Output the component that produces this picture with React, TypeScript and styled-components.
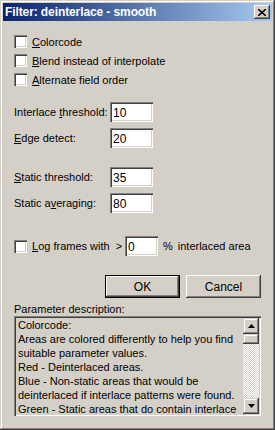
import React, { useState } from "react";
import styled, { createGlobalStyle } from "styled-components";

const GlobalStyle = createGlobalStyle`
  html, body {
    margin: 0;
    padding: 0;
    background: #d4d0c8;
  }
  body {
    font-family: "Liberation Sans", Arial, sans-serif;
    font-size: 11px;
    color: #000;
  }
`;

const Window = styled.div`
  width: 275px;
  height: 430px;
  box-sizing: border-box;
  background: #d4d0c8;
  padding: 3px;
  box-shadow: inset -1px -1px #404040, inset 1px 1px #d4d0c8,
    inset -2px -2px #808080, inset 2px 2px #ffffff;
  display: flex;
  flex-direction: column;
`;

const TitleBar = styled.div`
  height: 18px;
  display: flex;
  align-items: center;
  justify-content: space-between;
  padding: 0 2px 0 2px;
  background: linear-gradient(to right, #0a246a, #a6caf0);
`;

const Title = styled.span`
  color: #fff;
  font-weight: bold;
  font-size: 12px;
  letter-spacing: -0.1px;
`;

const CloseButton = styled.div`
  width: 16px;
  height: 14px;
  box-sizing: border-box;
  background: #d4d0c8;
  display: flex;
  align-items: center;
  justify-content: center;
  box-shadow: inset -1px -1px #404040, inset 1px 1px #ffffff,
    inset -2px -2px #808080;
`;

const Body = styled.div`
  flex: 1;
  display: flex;
  flex-direction: column;
  padding: 11px 11px 0 11px;
`;

const CheckRow = styled.label`
  height: 19px;
  display: flex;
  align-items: center;
  white-space: nowrap;
`;

const Box = styled.span`
  width: 13px;
  height: 13px;
  box-sizing: border-box;
  background: #fff;
  margin-right: 5px;
  flex-shrink: 0;
  box-shadow: inset 1px 1px #808080, inset 2px 2px #404040,
    inset -1px -1px #ffffff, inset -2px -2px #d4d0c8;
`;

const FieldRow = styled.div<{ $top: number }>`
  display: flex;
  align-items: center;
  margin-top: ${(p) => p.$top}px;
  white-space: nowrap;
`;

const Label = styled.span<{ $w?: number }>`
  width: ${(p) => p.$w ?? 96}px;
`;

const TextBox = styled.input<{ $w: number }>`
  width: ${(p) => p.$w}px;
  height: 20px;
  box-sizing: border-box;
  border: none;
  outline: none;
  margin: 0;
  padding: 2px 3px 0 3px;
  font-family: "Liberation Sans", Arial, sans-serif;
  font-size: 12px;
  background: #fff;
  box-shadow: inset 1px 1px #808080, inset 2px 2px #404040,
    inset -1px -1px #ffffff, inset -2px -2px #d4d0c8;
`;

const Extra = styled.span<{ $left: number }>`
  margin-left: ${(p) => p.$left}px;
`;

const ButtonRow = styled.div`
  display: flex;
  justify-content: flex-end;
  gap: 6px;
  margin-top: 19px;
`;

const Button = styled.button<{ $default?: boolean }>`
  width: 75px;
  height: 23px;
  box-sizing: border-box;
  border: none;
  margin: 0;
  padding: 0;
  background: #d4d0c8;
  font-family: "Liberation Sans", Arial, sans-serif;
  font-size: 12px;
  color: #000;
  box-shadow: ${(p) =>
    p.$default
      ? "inset 0 0 0 1px #000, inset -2px -2px #404040, inset 2px 2px #fff, inset -3px -3px #808080"
      : "inset -1px -1px #404040, inset 1px 1px #fff, inset -2px -2px #808080"};
`;

const Caption = styled.div`
  margin-top: 5px;
  height: 13px;
  line-height: 13px;
`;

const ListBox = styled.div`
  height: 100px;
  box-sizing: border-box;
  padding: 2px;
  display: flex;
  background: #d4d0c8;
  box-shadow: inset 1px 1px #808080, inset 2px 2px #404040,
    inset -1px -1px #ffffff, inset -2px -2px #d4d0c8;
`;

const ListText = styled.div`
  flex: 1;
  overflow: hidden;
  padding: 0 0 0 2px;
  font-size: 11px;
  line-height: 14px;
  white-space: nowrap;
`;

const ScrollBar = styled.div`
  width: 16px;
  display: flex;
  flex-direction: column;
  background: repeating-conic-gradient(#ffffff 0 25%, #d4d0c8 0 50%) 0 0 / 2px 2px;
`;

const ScrollButton = styled.div<{ $h: number }>`
  height: ${(p) => p.$h}px;
  box-sizing: border-box;
  background: #d4d0c8;
  display: flex;
  align-items: center;
  justify-content: center;
  box-shadow: inset -1px -1px #404040, inset 1px 1px #d4d0c8,
    inset -2px -2px #808080, inset 2px 2px #fff;
`;

const Track = styled.div`
  flex: 1;
`;

const Key = styled.u`
  text-decoration: underline;
`;

const Arrow = ({ up }: { up?: boolean }) => (
  <svg width="7" height="4" viewBox="0 0 7 4">
    <path d={up ? "M3.5 0 L7 4 L0 4 Z" : "M0 0 L7 0 L3.5 4 Z"} fill="#000" />
  </svg>
);

const lines = [
  "Colorcode:",
  "Areas are colored differently to help you find",
  "suitable parameter values.",
  "Red - Deinterlaced areas.",
  "Blue - Non-static areas that would be",
  "deinterlaced if interlace patterns were found.",
  "Green - Static areas that do contain interlace",
];

export default function App() {
  const [vals, setVals] = useState({
    interlace: "10",
    edge: "20",
    sthresh: "35",
    savg: "80",
    log: "0",
  });

  const set = (k: keyof typeof vals) => (e: React.ChangeEvent<HTMLInputElement>) =>
    setVals({ ...vals, [k]: e.target.value });

  return (
    <>
      <GlobalStyle />
      <Window>
        <TitleBar>
          <Title>Filter: deinterlace - smooth</Title>
          <CloseButton>
            <svg width="8" height="7" viewBox="0 0 8 7">
              <path d="M0 0 L8 7 M8 0 L0 7" stroke="#000" strokeWidth="1.6" />
            </svg>
          </CloseButton>
        </TitleBar>
        <Body>
          <CheckRow>
            <Box />
            <span>
              <Key>C</Key>olorcode
            </span>
          </CheckRow>
          <CheckRow>
            <Box />
            <span>
              <Key>B</Key>lend instead of interpolate
            </span>
          </CheckRow>
          <CheckRow>
            <Box />
            <span>
              <Key>A</Key>lternate field order
            </span>
          </CheckRow>

          <FieldRow $top={13}>
            <Label>
              Interlace <Key>t</Key>hreshold:
            </Label>
            <TextBox $w={43} value={vals.interlace} onChange={set("interlace")} />
          </FieldRow>
          <FieldRow $top={6}>
            <Label>
              <Key>E</Key>dge detect:
            </Label>
            <TextBox $w={43} value={vals.edge} onChange={set("edge")} />
          </FieldRow>

          <FieldRow $top={19}>
            <Label>
              <Key>S</Key>tatic threshold:
            </Label>
            <TextBox $w={43} value={vals.sthresh} onChange={set("sthresh")} />
          </FieldRow>
          <FieldRow $top={6}>
            <Label>
              Static a<Key>v</Key>eraging:
            </Label>
            <TextBox $w={43} value={vals.savg} onChange={set("savg")} />
          </FieldRow>

          <FieldRow $top={23}>
            <Box />
            <Label $w={93}>
              <Key>L</Key>og frames with &nbsp;&gt;
            </Label>
            <TextBox $w={33} value={vals.log} onChange={set("log")} />
            <Extra $left={5}>%</Extra>
            <Extra $left={5}>interlaced area</Extra>
          </FieldRow>

          <ButtonRow>
            <Button $default>OK</Button>
            <Button>Cancel</Button>
          </ButtonRow>

          <Caption>Parameter description:</Caption>
          <ListBox>
            <ListText>
              {lines.map((l) => (
                <div key={l}>{l}</div>
              ))}
            </ListText>
            <ScrollBar>
              <ScrollButton $h={16}>
                <Arrow up />
              </ScrollButton>
              <ScrollButton $h={10} />
              <Track />
              <ScrollButton $h={16}>
                <Arrow />
              </ScrollButton>
            </ScrollBar>
          </ListBox>
        </Body>
      </Window>
    </>
  );
}
